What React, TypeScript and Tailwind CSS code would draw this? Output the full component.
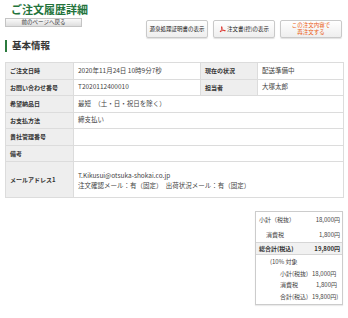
import React from "react"

const font = "font-['Noto_Sans_CJK_JP','Noto_Sans',sans-serif]"

function HeadButton({ children, className = "" }: { children: React.ReactNode; className?: string }) {
  return (
    <div
      className={`flex h-[18px] w-[62px] items-center justify-center rounded-[2px] border border-[#c9c9c9] bg-gradient-to-b from-white to-[#eeeeee] shadow-[0_1px_1px_rgba(0,0,0,0.12)] text-[5.5px] leading-[7px] text-[#222] ${className}`}
    >
      {children}
    </div>
  )
}

function PdfIcon() {
  return (
    <svg width="7" height="7" viewBox="0 0 14 14" className="mr-[1px] shrink-0">
      <path d="M2 12 C5 8 6 5 6 2 C6 1 5 1 5 2 C5 5 8 9 12 10 C13 10 13 9 12 9 C8 8 4 10 2 12 Z" fill="none" stroke="#d8221b" strokeWidth="1.6" />
    </svg>
  )
}

const rows = [
  { label: "希望納品日", value: "最短　（土・日・祝日を除く）" },
  { label: "お支払方法", value: "締支払い" },
  { label: "貴社管理番号", value: "" },
  { label: "備考", value: "" },
]

const labelCls = "border border-[#dcdcdc] bg-[#eeeeee] px-[4px] text-left align-middle font-bold text-[6px] text-[#333]"
const valueCls = "border border-[#dcdcdc] bg-white px-[4px] text-left align-middle text-[6.5px] text-[#444]"

export default function App() {
  return (
    <div className={`h-[318px] w-[348px] overflow-hidden bg-white ${font}`}>
      {/* page title */}
      <div className="h-[17px] pl-[11px] pt-[3px] text-[11px] font-bold leading-[12px] text-[#23733b]">ご注文履歴詳細</div>

      {/* back button + action buttons */}
      <div className="flex items-start justify-between pl-[5px] pr-[6px]">
        <div className="mt-[1px] flex h-[9px] w-[77px] items-center justify-center border border-[#c4c4c4] bg-gradient-to-b from-[#fafafa] to-[#dedede] text-[5.5px] leading-none text-[#333]">
          前のページへ戻る
        </div>
        <div className="mt-[3px] flex gap-[5px]">
          <HeadButton>源泉処理証明書の表示</HeadButton>
          <HeadButton>
            <PdfIcon />
            注文書(控)の表示
          </HeadButton>
          <HeadButton className="flex-col text-[#ea5a12]">
            <span>この注文内容で</span>
            <span>再注文する</span>
          </HeadButton>
        </div>
      </div>

      {/* section heading */}
      <div className="mt-[2px] flex h-[12px] items-center pl-[5px]">
        <div className="h-[12px] w-[2px] bg-[#2b7a3d]" />
        <span className="ml-[5px] text-[9.5px] font-bold leading-none text-[#333]">基本情報</span>
      </div>

      {/* info table */}
      <table className="ml-[5px] mt-[10px] w-[338px] table-fixed border-collapse">
        <colgroup>
          <col className="w-[68px]" />
          <col className="w-[127px]" />
          <col className="w-[57px]" />
          <col className="w-[86px]" />
        </colgroup>
        <tbody>
          <tr className="h-[16.5px]">
            <th className={labelCls}>ご注文日時</th>
            <td className={valueCls}>2020年11月24日 10時9分7秒</td>
            <th className={labelCls}>現在の状況</th>
            <td className={valueCls}>配送準備中</td>
          </tr>
          <tr className="h-[16.5px]">
            <th className={labelCls}>お問い合わせ番号</th>
            <td className={valueCls}>T2020112400010</td>
            <th className={labelCls}>担当者</th>
            <td className={valueCls}>大塚太郎</td>
          </tr>
          {rows.map(r => (
            <tr key={r.label} className="h-[16.5px]">
              <th className={labelCls}>{r.label}</th>
              <td className={valueCls} colSpan={3}>{r.value}</td>
            </tr>
          ))}
          <tr className="h-[36px]">
            <th className={labelCls}>メールアドレス1</th>
            <td className={`${valueCls} leading-[10px]`} colSpan={3}>
              <div>T.Kikusui@otsuka-shokai.co.jp</div>
              <div>注文確認メール：有（固定）　出荷状況メール：有（固定）</div>
            </td>
          </tr>
        </tbody>
      </table>

      {/* price summary */}
      <div className="ml-auto mr-[5px] mt-[13px] w-[88px] border border-[#cccccc] text-[6px] text-[#444] shadow-[0_1px_1px_rgba(0,0,0,0.08)]">
        <div className="flex h-[15px] items-center justify-between pl-[3px] pr-[2px]">
          <span>小計（税抜）</span>
          <span>18,000円</span>
        </div>
        <div className="flex h-[15px] items-center justify-between pl-[10px] pr-[2px]">
          <span>消費税</span>
          <span>1,800円</span>
        </div>
        <div className="flex h-[13px] items-center justify-between border-y border-[#d6d6d6] bg-[#f1f1f1] pl-[3px] pr-[2px] font-bold text-[#333]">
          <span>総合計(税込)</span>
          <span>19,800円</span>
        </div>
        <div className="pb-[2px] pl-[14px] pt-[1px] leading-[11.5px]">
          <div>(10% 対象</div>
          <div className="grid grid-cols-[32px_auto] pl-[10px]">
            <span>小計(税抜)</span>
            <span>18,000円</span>
            <span>消費税</span>
            <span className="pl-[4px]">1,800円</span>
            <span>合計(税込)</span>
            <span>19,800円)</span>
          </div>
        </div>
      </div>
    </div>
  )
}
